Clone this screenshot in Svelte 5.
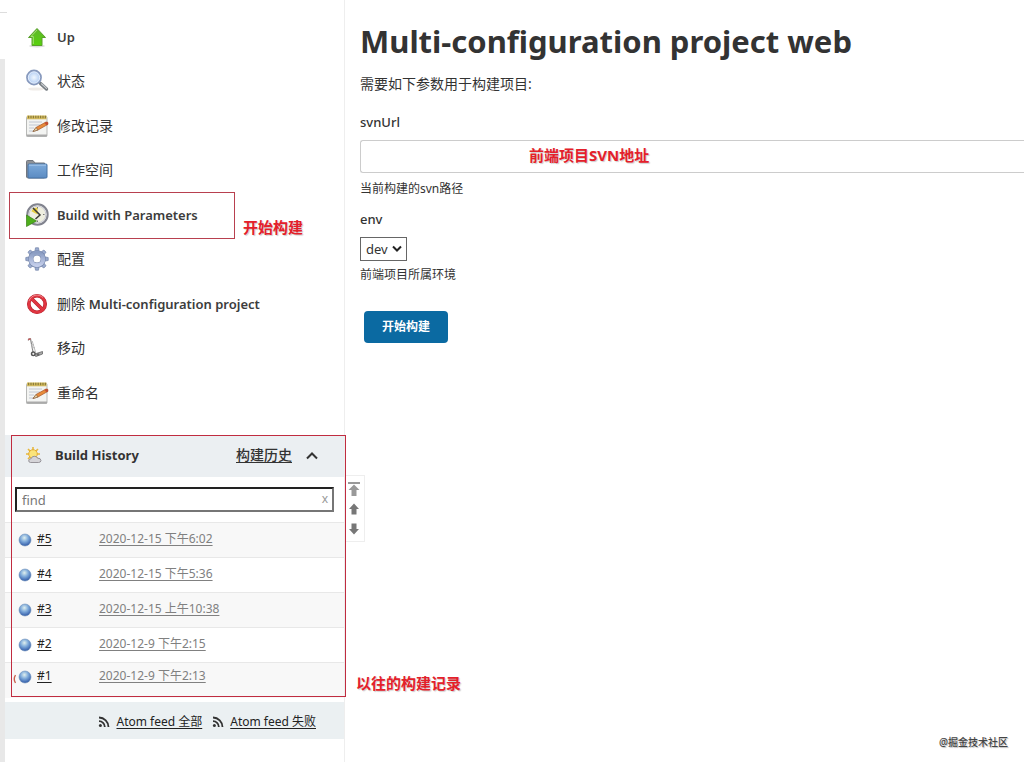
<script>
  const tasks = [
    { icon: 'up', latin: 'Up' },
    { icon: 'search', label: '状态' },
    { icon: 'notepad', label: '修改记录' },
    { icon: 'folder', label: '工作空间' },
    { icon: 'clock', latin: 'Build with Parameters', note: '开始构建' },
    { icon: 'gear', label: '配置' },
    { icon: 'stop', label: '删除', latin: 'Multi-configuration project' },
    { icon: 'move', label: '移动' },
    { icon: 'notepad', label: '重命名' }
  ];
  const builds = [
    { id: '#5', date: '2020-12-15 下午6:02' },
    { id: '#4', date: '2020-12-15 下午5:36' },
    { id: '#3', date: '2020-12-15 上午10:38' },
    { id: '#2', date: '2020-12-9 下午2:15' },
    { id: '#1', date: '2020-12-9 下午2:13' }
  ];
  const teeth = [0, 45, 90, 135, 180, 225, 270, 315];
  let svnUrl = $state('');
  let find = $state('');
  let env = $state('dev');
</script>

{#snippet feed()}
  <svg class="feed" viewBox="0 0 12 12" aria-hidden="true">
    <circle cx="2.4" cy="9.6" r="1.5" fill="#333" />
    <path d="M1 5.2A5.8 5.8 0 0 1 6.8 11M1 1.5A9.5 9.5 0 0 1 10.5 11" fill="none" stroke="#333" stroke-width="1.8" />
  </svg>
{/snippet}

{#snippet icon(name)}
  <svg class="icon" viewBox="0 0 24 24" aria-hidden="true">
    {#if name === 'up'}
      <ellipse cx="12" cy="21" rx="8" ry="1.5" fill="#ddd" />
      <path d="M12 3.5L20.5 12.5H17V20.5H7V12.5H3.5Z" fill="url(#green)" stroke="#5aa02c" stroke-width="1" stroke-linejoin="round" />
      <path d="M12 5L6 11.5H8.3V19" fill="none" stroke="#b5e68a" stroke-width=".8" />
    {:else if name === 'search'}
      <ellipse cx="11" cy="20" rx="8" ry="1.6" fill="#f0ece8" />
      <path d="M15.5 14.5L21.5 20" stroke="#777d82" stroke-width="3.4" stroke-linecap="round" />
      <path d="M16.5 14.8L21.5 19.4" stroke="#c9cdd0" stroke-width="1.2" stroke-linecap="round" />
      <circle cx="9" cy="8.5" r="7" fill="url(#lens)" stroke="#8799bd" stroke-width="1.8" />
      <circle cx="9" cy="8.5" r="5.7" fill="none" stroke="#edf4ff" stroke-width=".8" />
    {:else if name === 'notepad'}
      <rect x="1.5" y="2.5" width="20.5" height="20" rx="1" fill="#f3f4f2" stroke="#b8b9b7" />
      <path d="M1.5 21.5H22" stroke="#aaa" stroke-width="2" />
      <rect x="2" y="1.5" width="19.5" height="3.8" fill="#d6bd60" />
      <path d="M3 3H21" stroke="#8b7d3c" stroke-width="2.4" stroke-dasharray="1.2 1.2" />
      <path d="M4 8H17M4 11H15M4 14H9M4 17H8" stroke="#bcc2cd" stroke-width=".9" />
      <path d="M8 17.5L11 13.5L21 8Q23.5 7.5 23 10.3L13 16Z" fill="#e88b3a" stroke="#a65424" stroke-width=".7" />
      <path d="M8 17.5L11 13.5L13 16Z" fill="#ead0a0" stroke="#665341" stroke-width=".5" />
      <path d="M19.5 8.9L21 8Q23.5 7.5 23 10.3L21.4 11.2Z" fill="#c24e34" />
    {:else if name === 'folder'}
      <path d="M1.5 19V3.5Q1.5 2.5 2.5 2.5H8L10 5H19.5V20H2.5Z" fill="#8d9197" stroke="#72777f" />
      <rect x="3" y="6" width="19" height="14" rx="1" fill="url(#blue)" stroke="#4672a5" />
      <path d="M4 7.1H21" stroke="#a9caed" />
    {:else if name === 'clock'}
      <circle cx="12.5" cy="11.5" r="10.2" fill="#f2f2ed" stroke="#81838e" stroke-width="2" />
      <circle cx="12.5" cy="11.5" r="8.4" fill="#eeeedf" stroke="#c8c9d6" />
      <path d="M12.5 11.5V4.5A7 7 0 0 0 6.4 8.2Z" fill="#e7cf41" />
      <path d="M8 5L15 12L10.5 16" fill="none" stroke="#3b3b35" stroke-width="1.5" />
      <path d="M12.5 4V5.5M19.5 11.5H18M12.5 19V17.5" stroke="#777" />
      <path d="M1.5 12L11.5 18L1.5 23.5Z" fill="#4eae1c" stroke="#388015" stroke-width=".7" />
    {:else if name === 'gear'}
      {#each teeth as angle}
        <path d="M9.8 5L10.5 .8H13.5L14.2 5Z" fill="#9aabcf" stroke="#7182a7" stroke-width=".7" transform="rotate({angle} 12 12)" />
      {/each}
      <circle cx="12" cy="12" r="6.2" fill="none" stroke="#7182a7" stroke-width="5.2" />
      <circle cx="12" cy="12" r="6.2" fill="none" stroke="url(#steel)" stroke-width="4.2" />
    {:else if name === 'stop'}
      <circle cx="12" cy="12" r="8.2" fill="#fff" stroke="#b3202b" stroke-width="3.6" />
      <path d="M6 6L18 18" stroke="#b3202b" stroke-width="3.6" />
      <circle cx="12" cy="12" r="8.2" fill="none" stroke="#df3540" stroke-width="2.6" />
      <path d="M6 6L18 18" stroke="#df3540" stroke-width="2.6" />
      <path d="M4 9A8.5 8.5 0 0 1 18 5.5" fill="none" stroke="#f49297" stroke-width=".9" />
    {:else if name === 'move'}
      <path d="M3.5 4.5Q3 2.5 5.5 2.8L8 16" fill="none" stroke="#888" stroke-width="1.2" />
      <path d="M3.2 3.6L5.6 2.8" stroke="#c45a5a" stroke-width="1.5" />
      <path d="M7.2 5L10.5 16M6 9L9 8.5M7 12L10 11.5" stroke="#bbb" stroke-width="1" />
      <path d="M8 18.5L17.5 15.5V18L11 20.5Z" fill="#aaa" stroke="#666" stroke-width=".8" />
      <circle cx="8.3" cy="17.8" r="2.5" fill="#555" /><circle cx="8.3" cy="17.8" r="1.1" fill="#eee" />
      <circle cx="13" cy="18.6" r="1.4" fill="#666" />
    {/if}
  </svg>
{/snippet}

<svg class="defs" aria-hidden="true">
  <defs>
    <linearGradient id="green" x2="0" y2="1"><stop stop-color="#5fb62c" /><stop offset="1" stop-color="#58d20c" /></linearGradient>
    <linearGradient id="blue" x2="0" y2="1"><stop stop-color="#7ba9da" /><stop offset="1" stop-color="#5b8bc2" /></linearGradient>
    <linearGradient id="steel" x2="0" y2="1"><stop stop-color="#8a9cc2" /><stop offset="1" stop-color="#c3cdea" /></linearGradient>
    <radialGradient id="lens"><stop stop-color="#f0f7ff" /><stop offset="1" stop-color="#acc9f2" /></radialGradient>
    <radialGradient id="ball" cx=".45" cy=".32" r=".7"><stop stop-color="#e0f0ee" /><stop offset=".45" stop-color="#7fabdb" /><stop offset="1" stop-color="#2c55a4" /></radialGradient>
  </defs>
</svg>

<div class="page">
  <div class="edge"></div>
  <aside>
    <nav>
      {#each tasks as task}
        <div class="task" class:marked={task.note}>
          <a href="#task">
            {@render icon(task.icon)}
            <span>{task.label ?? ''}{#if task.latin}{task.label ? ' ' : ''}<b>{task.latin}</b>{/if}</span>
          </a>
          {#if task.note}<strong class="note">{task.note}</strong>{/if}
        </div>
      {/each}
    </nav>

    <section class="history">
      <header>
        <svg class="weather" viewBox="0 0 18 18" aria-hidden="true">
          <path d="M8 1V15M1 8H15M3 3L13 13M3 13L13 3" stroke="#e8b83d" stroke-width="1.6" />
          <circle cx="8" cy="8" r="4.3" fill="#fbe47a" stroke="#e3ab32" />
          <path d="M5.5 16.5Q3.2 16.3 3.8 14Q4.5 12.5 6 12.8Q7 9.8 9.8 10.3Q12 10.5 12.6 12.2Q15.8 12 16 14.5Q15.8 16.5 13.5 16.5Z" fill="#d5d4d8" stroke="#8e8b91" stroke-width=".9" />
        </svg>
        <h2>Build History</h2>
        <a href="#trend">构建历史</a>
        <svg class="chevron" viewBox="0 0 12 12" aria-hidden="true"><path d="M1 9.5L6 4.5L11 9.5" fill="none" stroke="#333" stroke-width="2" /></svg>
      </header>
      <div class="find">
        <input aria-label="find" placeholder="find" bind:value={find} />
        <button type="button" aria-label="clear" onclick={() => (find = '')}>x</button>
      </div>
      <table>
        <tbody>
          {#each builds as build}
            <tr>
              <td class="id">
                <svg viewBox="0 0 14 14" aria-hidden="true"><circle cx="7" cy="7" r="6" fill="url(#ball)" stroke="#6f90b8" stroke-width=".6" /></svg><a href="#build">{build.id}</a>
              </td>
              <td><a href="#build">{build.date}</a></td>
            </tr>
          {/each}
        </tbody>
      </table>
      <div class="frame">
        <svg viewBox="0 0 3 10" aria-hidden="true"><path d="M2.5 1Q0 5 2.5 9" fill="none" stroke="#c8604f" stroke-width="1.4" /></svg>
      </div>
      <strong class="note">以往的构建记录</strong>
      <div class="pager">
        <svg viewBox="0 0 12 14" aria-hidden="true"><path d="M0 0H12V2H0ZM6 2.5L11.5 8H8.5V14H3.5V8H.5Z" fill="#999" /></svg>
        <svg viewBox="0 0 12 14" aria-hidden="true"><path d="M6 1.5L11 7H8.5V12.5H3.5V7H1Z" fill="#777" /></svg>
        <svg viewBox="0 0 12 14" aria-hidden="true"><path d="M6 12.5L11 7H8.5V1.5H3.5V7H1Z" fill="#777" /></svg>
      </div>
    </section>

    <footer>
      <a href="#all">{@render feed()}<span>Atom feed 全部</span></a>
      <a href="#failed">{@render feed()}<span>Atom feed 失败</span></a>
    </footer>
  </aside>

  <main>
    <h1>Multi-configuration project web</h1>
    <p>需要如下参数用于构建项目:</p>
    <form onsubmit={(e) => e.preventDefault()}>
      <label for="svn">svnUrl</label>
      <div class="field">
        <input id="svn" bind:value={svnUrl} />
        <strong class="note">前端项目SVN地址</strong>
      </div>
      <small>当前构建的svn路径</small>
      <label for="env">env</label>
      <div class="select">
        <select id="env" bind:value={env}><option>dev</option></select>
        <svg viewBox="0 0 10 8" aria-hidden="true"><path d="M1 1.5L5 5.5L9 1.5" fill="none" stroke="#222" stroke-width="2" /></svg>
      </div>
      <small>前端项目所属环境</small>
      <button class="submit">开始构建</button>
    </form>
  </main>
  <span class="credit">@掘金技术社区</span>
</div>

<style>
  :global(body) { margin: 0; background: #fff; }
  .page {
    position: relative;
    display: flex;
    min-height: 100vh;
    overflow: hidden;
    color: #333;
    font: 14px/20px "Noto Sans", "Noto Sans CJK SC", sans-serif;
  }
  .page * { box-sizing: border-box; }
  input, button, select { font: inherit; color: inherit; }
  a { color: inherit; }
  .defs { position: absolute; width: 0; height: 0; }
  .edge { flex: 0 0 5px; margin-top: 59px; background: #e8e8e8; }
  .edge::before { content: ""; position: absolute; top: 12px; left: 0; width: 7px; height: 1px; background: #ddd; }
  aside { flex: 0 0 340px; border-right: 1px solid #eee; }

  nav { padding: 14px 0 20px; }
  .task { position: relative; display: flex; height: 45px; padding-left: 20px; }
  .task:nth-child(even) { height: 44px; }
  .task a { display: flex; align-items: center; gap: 8px; text-decoration: none; white-space: nowrap; }
  .task b { font-size: 13px; font-weight: 600; color: #3c3c3c; }
  .icon { width: 24px; height: 24px; }
  .marked::before { content: ""; position: absolute; inset: 0 109px -2px 4px; border: 1px solid #b8404f; }
  .note { color: #e4202a; font-size: 15px; line-height: 20px; font-weight: 700; white-space: nowrap; text-shadow: 1px 1px 1px #ccc; }
  .task .note { position: absolute; left: 238px; top: 25px; }

  .history { position: relative; }
  .history header { display: flex; align-items: center; height: 42px; padding: 0 26px 2px 20px; background: #ebeff2; }
  .weather { width: 18px; height: 18px; margin-right: 12px; }
  h2 { flex: 1; margin: 0; font-size: 13px; font-weight: 700; }
  header a { font-weight: 500; margin-right: 14px; text-underline-offset: 2px; }
  .chevron { width: 12px; height: 12px; }
  .find { position: relative; padding: 10px 10px; }
  .find input { display: block; width: 100%; height: 25px; padding: 0 5px; border: 2px solid; border-color: #222 #767676 #767676 #222; background: #fff; font-size: 13px; outline: 0; }
  .find input::placeholder { color: #777; opacity: 1; }
  .find button { position: absolute; right: 14px; top: 12px; height: 20px; padding: 0 2px; border: 0; background: none; color: #999; font-size: 12px; }
  table { width: 100%; border-collapse: collapse; font-size: 12px; line-height: 16px; }
  tr { height: 35px; border-top: 1px solid #e8e8e8; }
  tr:nth-child(odd) { background: #f8f8f8; }
  td { padding: 0 0 2px; color: #808080; vertical-align: middle; }
  tr:last-child td { padding-bottom: 8px; }
  td a { text-underline-offset: 2px; }
  td.id { width: 94px; padding-left: 13px; color: #222; }
  .id svg { width: 14px; height: 14px; margin-right: 5px; vertical-align: -4px; }
  .frame { position: absolute; inset: 0 -2px 1px 6px; border: 1px solid #c02c40; pointer-events: none; }
  .frame svg { position: absolute; left: 1px; bottom: 12px; width: 3px; height: 10px; }
  .history > .note { position: absolute; left: 351px; bottom: 5px; }
  .pager { position: absolute; left: 341px; top: 40px; display: grid; gap: 6px; padding: 6px 4px 5px 2px; border: 1px solid #eee; border-left: 0; }
  .pager svg { width: 12px; height: 14px; }

  footer { display: flex; justify-content: flex-end; gap: 10px; height: 37px; margin-top: 4px; padding: 3px 28px 0 0; background: #ebf0f2; font-size: 12px; }
  footer a { display: flex; align-items: center; gap: 6px; text-decoration: none; color: #222; white-space: nowrap; }
  footer span { text-decoration: underline; text-underline-offset: 2px; }
  .feed { width: 12px; height: 12px; }

  main { flex: 1; min-width: 0; padding: 21px 0 0 15px; }
  h1 { margin: 0 0 13px; font-size: 31px; line-height: 40px; font-weight: 700; white-space: nowrap; }
  p { margin: 0 0 18px; }
  form { display: flex; flex-direction: column; align-items: flex-start; }
  label { font-size: 13px; font-weight: 500; margin-bottom: 8px; }
  .field { position: relative; align-self: stretch; margin-bottom: 6px; }
  .field input { display: block; width: 100%; height: 33px; padding: 0 8px; border: 1px solid #ccc; border-right: 0; border-radius: 3px 0 0 3px; }
  .field .note { position: absolute; left: 169px; top: 5px; pointer-events: none; }
  small { font-size: 12px; line-height: 20px; margin-bottom: 10px; }
  .select { position: relative; margin-bottom: 4px; }
  select { display: block; width: 47px; height: 24px; padding: 0 5px; border: 1px solid #666; border-radius: 0; background: #fff; font-size: 13px; appearance: none; }
  .select svg { position: absolute; right: 5px; top: 8px; width: 10px; height: 8px; pointer-events: none; }
  .submit { margin: 16px 0 0 4px; height: 32px; padding: 0 18px; border: 0; border-radius: 4px; background: #0b6aa2; color: #fff; font-size: 12px; font-weight: 700; }
  .credit { position: absolute; right: 16px; bottom: 12px; font-size: 10px; line-height: 16px; font-weight: 500; color: #444; text-shadow: 1px 1px 1px #bbb; }
</style>
